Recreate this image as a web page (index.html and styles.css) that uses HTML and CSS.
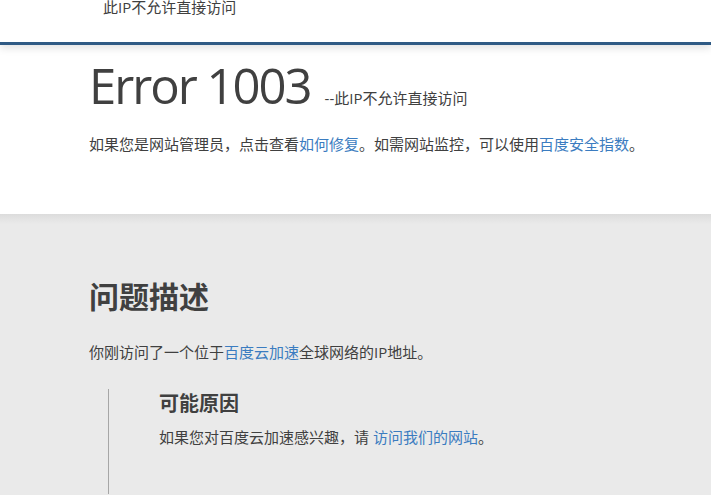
FILE: index.html
```html
<!DOCTYPE html>
<html lang="zh-CN">
<head>
<meta charset="utf-8">
<title>Error 1003</title>
<link rel="stylesheet" href="styles.css">
</head>
<body>
<div class="topbar">此IP不允许直接访问</div>
<header class="hero">
  <h1 class="title"><span class="code">Error 1003</span><span class="sub">--此IP不允许直接访问</span></h1>
  <p class="text">如果您是网站管理员，点击查看<a href="#">如何修复</a>。如需网站监控，可以使用<a href="#">百度安全指数</a>。</p>
</header>
<section class="detail">
  <h2 class="heading">问题描述</h2>
  <p class="text">你刚访问了一个位于<a href="#">百度云加速</a>全球网络的IP地址。</p>
  <blockquote class="quote">
    <h3 class="subheading">可能原因</h3>
    <p class="text">如果您对百度云加速感兴趣，请 <a href="#">访问我们的网站</a>。</p>
  </blockquote>
</section>
</body>
</html>
```
FILE: styles.css
```css
html, body {
  margin: 0;
  padding: 0;
}
body {
  font-family: "Open Sans", "Noto Sans CJK SC", sans-serif;
  color: #404040;
  background: #eaeaea;
}
a {
  color: #3b7cc0;
  text-decoration: none;
}
.topbar {
  position: relative;
  z-index: 2;
  height: 42px;
  padding-left: 103px;
  font-size: 15px;
  line-height: 15px;
  background: #fff;
  border-bottom: 3px solid #2f5a84;
  box-shadow: 0 3px 8px rgba(0, 0, 0, 0.12);
}
.hero {
  background: #fff;
  height: 153px;
  padding: 16px 0 0 89px;
}
.title {
  margin: 0;
  display: flex;
  align-items: baseline;
  font-weight: 400;
}
.code {
  font-size: 49px;
  line-height: 49px;
  letter-spacing: -2px;
}
.sub {
  font-size: 15px;
  line-height: 15px;
  margin-left: 14px;
}
.text {
  margin: 0;
  font-size: 15px;
  line-height: 20px;
}
.hero .text {
  margin-top: 24px;
}
.detail {
  padding: 65px 0 0 89px;
  background: linear-gradient(#dcdcdc, #eaeaea 10px);
}
.heading {
  margin: 0;
  font-size: 30px;
  line-height: 36px;
  font-weight: 700;
}
.detail > .text {
  margin-top: 27px;
}
.quote {
  margin: 27px 0 0 19px;
  padding: 1px 0 47px 50px;
  border-left: 1px solid #a6a6a6;
}
.subheading {
  margin: 0;
  font-size: 20px;
  line-height: 28px;
  font-weight: 700;
}
.quote .text {
  margin-top: 9px;
}
```
